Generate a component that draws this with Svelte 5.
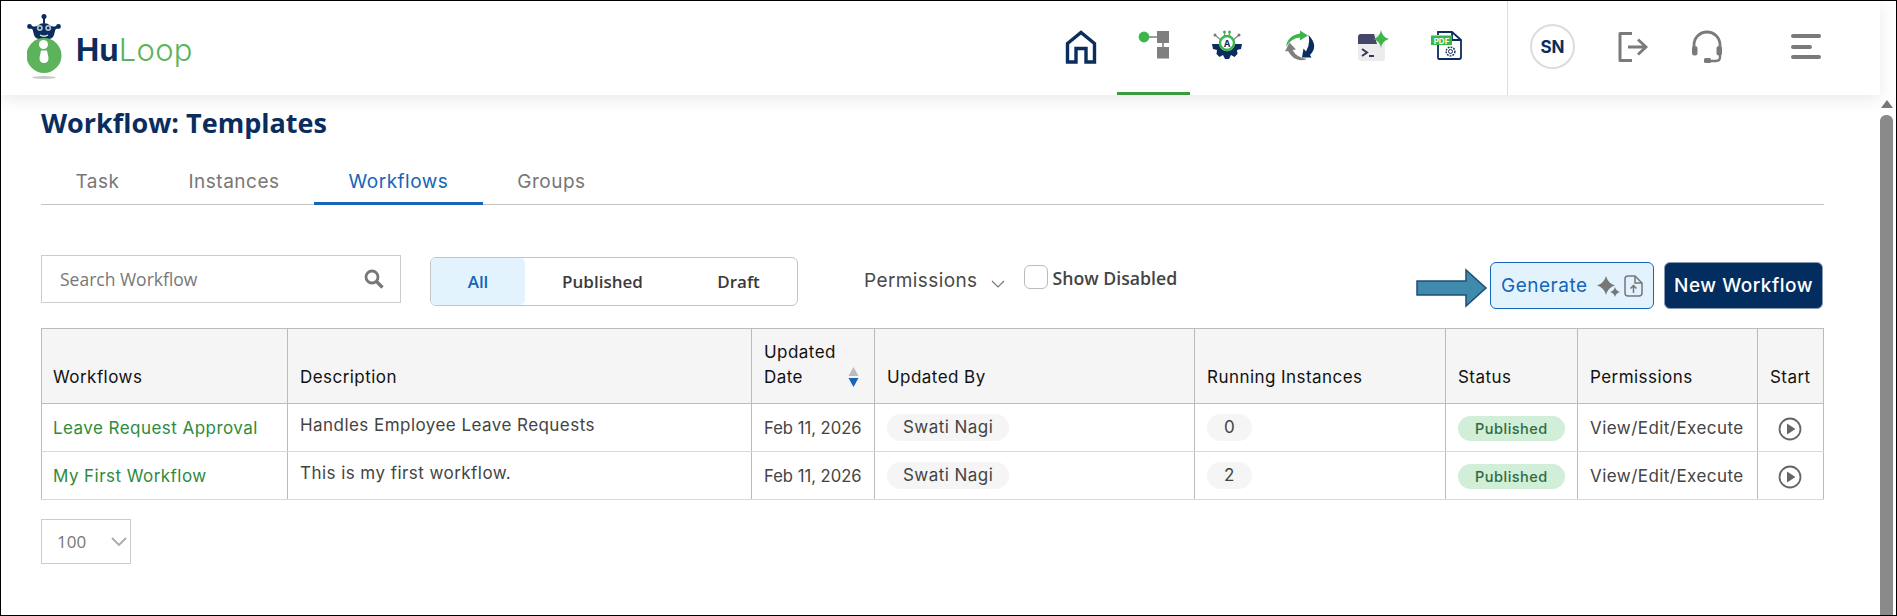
<script>
	const tabs = ['Task', 'Instances', 'Workflows', 'Groups'];
	const rows = [
		{ name: 'Leave Request Approval', desc: 'Handles Employee Leave Requests', date: 'Feb 11, 2026', by: 'Swati Nagi', running: 0 },
		{ name: 'My First Workflow', desc: 'This is my first workflow.', date: 'Feb 11, 2026', by: 'Swati Nagi', running: 2 }
	];
</script>

<div class="frame">
	<div class="page">
		<header>
			<div class="logo">
				<svg width="50" height="72" viewBox="0 0 50 72">
					<circle cx="17" cy="2.500" r="2.500" fill="#0a2d5e" />
					<rect x="16" y="4" width="2" height="5" fill="#0a2d5e" />
					<path d="M5 13 L10 12 Q17 6 24 12 L29 13 L27 21 Q26 25.500 17 25.500 Q8 25.500 7 21 Z" fill="#0a2d5e" />
					<circle cx="2.500" cy="12.500" r="2.400" fill="#0a2d5e" />
					<circle cx="31.500" cy="12.500" r="2.400" fill="#0a2d5e" />
					<path d="M3 12.500 L8 15 M31 12.500 L26 15" stroke="#0a2d5e" stroke-width="3" />
					<circle cx="12.800" cy="14" r="3" fill="#b4c0d0" />
					<circle cx="21.200" cy="14" r="3" fill="#b4c0d0" />
					<circle cx="12.800" cy="14" r="1.300" fill="#0a2d5e" />
					<circle cx="21.200" cy="14" r="1.300" fill="#0a2d5e" />
					<path d="M13 21 Q17 23.500 21 21" stroke="#e3e8ef" stroke-width="1.300" fill="none" />
					<circle cx="17" cy="41.500" r="17.500" fill="#5cb35c" />
					<circle cx="16.500" cy="30.500" r="4.500" fill="#fff" />
					<path d="M14 36.500 H20 L21.500 44 Q21.500 49 17 49 Q12.500 49 12.500 44 Z" fill="#fff" />
					<ellipse cx="17" cy="63.500" rx="12" ry="1.500" fill="#c9c9c9" />
				</svg>
				<span class="brand"><b>Hu</b><span>Loop</span></span>
			</div>

			<nav>
				<div class="nav-item">
					<svg width="32" height="34" viewBox="0 0 32 34">
						<path d="M2.500 32 V13.500 L16 2.500 L29.500 13.500 V32 H21 V18.500 H11 V32 Z" fill="none" stroke="#0a2d5e" stroke-width="3.400" />
					</svg>
				</div>
				<div class="nav-item active">
					<svg width="32" height="32" viewBox="0 0 32 32">
						<path d="M6 7 H20 M25 12 V20" stroke="#7f7f7f" stroke-width="1.600" fill="none" />
						<circle cx="6" cy="7" r="5.400" fill="#3cb54a" />
						<rect x="19" y="1" width="12" height="12" fill="#7f7f7f" />
						<rect x="19" y="17" width="12" height="11.500" fill="#7f7f7f" />
					</svg>
				</div>
				<div class="nav-item">
					<svg width="32" height="30" viewBox="0 0 32 30">
						<path d="M1 14 H8 L9 17 A8 8 0 0 0 23 17 L24 14 H31 L30 19 L26 20 L26.500 24 L23.500 27 L20 25 L18 29 H14 L12 25 L8.500 27 L5.500 24 L6 20 L2 19 Z" fill="#0a2d5e" />
						<path d="M4 5 L11 11 M28 5 L21 11 M13.500 3 V8 M18.500 3 V8" stroke="#888" stroke-width="1.200" />
						<circle cx="4" cy="5" r="1.500" fill="#777" />
						<circle cx="28" cy="5" r="1.500" fill="#777" />
						<circle cx="13.500" cy="2" r="1.500" fill="#3cb54a" />
						<circle cx="18.500" cy="2" r="1.500" fill="#3cb54a" />
						<circle cx="16" cy="13" r="7" fill="#fff" stroke="#3cb54a" stroke-width="2.400" />
						<text x="16" y="16.500" text-anchor="middle" class="gear-a">A</text>
					</svg>
				</div>
				<div class="nav-item">
					<svg width="32" height="32" viewBox="0 0 32 32">
						<path d="M2 17 Q3 6 16 3.500 L16 0.500 L24 5.500 L16 10.500 L16 7.500 Q7 8 2 17 Z" fill="#3cb54a" />
						<path d="M24.500 5 Q35 16 26 25 L27.500 27.500 L18 27.500 L19.500 18.500 L22 21.500 Q26.500 14 24.500 5 Z" fill="#0a2d5e" />
						<path d="M23 29 Q11 33.500 4 21 L1 21.500 L5.500 12.500 L12 19.500 L8.500 20 Q13 28 23 29 Z" fill="#7f7f7f" />
					</svg>
				</div>
				<div class="nav-item">
					<svg width="32" height="32" viewBox="0 0 32 32">
						<rect x="1" y="4" width="27" height="27" rx="3" fill="#ececee" />
						<path d="M1 14 V7 Q1 4 4 4 H17 L20 14 Z" fill="#46466c" />
						<path d="M24 0 Q25 7 32 9 Q25 11 24 18 Q23 11 16 9 Q23 7 24 0 Z" fill="#3cb54a" />
						<path d="M5 19 L10 22.500 L5 26" fill="none" stroke="#36365a" stroke-width="2" />
						<path d="M12 26 H17" stroke="#36365a" stroke-width="2" />
					</svg>
				</div>
				<div class="nav-item">
					<svg width="32" height="30" viewBox="0 0 32 30">
						<path d="M8 5 V2 H22 L31 10 V27 Q31 29 29 29 H9 Q8 29 8 27 V15" fill="none" stroke="#0a2d5e" stroke-width="1.800" />
						<path d="M22 2 V10 H31" fill="none" stroke="#0a2d5e" stroke-width="1.800" />
						<rect x="1" y="5.500" width="21" height="9.500" fill="#3cb54a" />
						<text x="11.500" y="13.500" text-anchor="middle" class="pdf">PDF</text>
						<circle cx="20.500" cy="21.500" r="2" fill="none" stroke="#0a2d5e" stroke-width="1" />
						<circle cx="20.500" cy="21.500" r="4.400" fill="none" stroke="#0a2d5e" stroke-width="1.400" stroke-dasharray="1.800 1.100" />
					</svg>
				</div>
			</nav>

			<div class="actions">
				<div class="avatar">SN</div>
				<svg class="logout" width="32" height="32" viewBox="0 0 32 32">
					<path d="M15 2.500 H3 V29.500 H15" fill="none" stroke="#7a7a7a" stroke-width="3" stroke-linejoin="round" />
					<path d="M11 16 H28 M21 8.500 L29 16 L21 23.500" fill="none" stroke="#7a7a7a" stroke-width="2.800" />
				</svg>
				<svg class="headset" width="32" height="34" viewBox="0 0 32 34">
					<path d="M3 18 V15 A13 13 0 0 1 29 15 V18" fill="none" stroke="#7a7a7a" stroke-width="2.800" />
					<rect x="1" y="16" width="5.500" height="9.500" rx="2.500" fill="#7a7a7a" />
					<rect x="25.500" y="16" width="5.500" height="9.500" rx="2.500" fill="#7a7a7a" />
					<path d="M29 24 V27 Q29 31 25 31 H15" fill="none" stroke="#7a7a7a" stroke-width="2.400" />
					<rect x="13" y="28" width="7" height="5" rx="1.500" fill="#7a7a7a" />
				</svg>
				<div class="burger"><i></i><i class="short"></i><i></i></div>
			</div>
		</header>

		<main>
			<h1>Workflow: Templates</h1>

			<div class="tabs">
				{#each tabs as tab}
					<div class="tab" class:current={tab === 'Workflows'}>{tab}</div>
				{/each}
			</div>

			<div class="toolbar">
				<div class="search">
					<span>Search Workflow</span>
					<svg width="20" height="20" viewBox="0 0 20 20">
						<circle cx="8" cy="8" r="6" fill="none" stroke="#777" stroke-width="2.800" />
						<path d="M12.500 12.500 L18.500 18.500" stroke="#777" stroke-width="3.400" />
					</svg>
				</div>
				<div class="segment">
					<div class="seg on">All</div>
					<div class="seg pub">Published</div>
					<div class="seg draft">Draft</div>
				</div>
				<div class="perm">
					Permissions
					<svg width="14" height="8" viewBox="0 0 14 8"><path d="M1 1 L7 7 L13 1" fill="none" stroke="#777" stroke-width="1.200" /></svg>
				</div>
				<div class="check">
					<span class="box"></span>
					<span>Show Disabled</span>
				</div>
				<div class="buttons">
					<svg class="pointer" width="72" height="40" viewBox="0 0 72 40">
						<path d="M1 13 H50 V2 L70 20 L50 38 V27 H1 Z" fill="#3f8aad" stroke="#1d4f75" stroke-width="1.500" />
					</svg>
					<button class="generate">
						Generate
						<svg width="23" height="22" viewBox="0 0 23 22">
							<path d="M9 1 Q11 8.500 18 10.500 Q11 12.500 9 20 Q7 12.500 0 10.500 Q7 8.500 9 1 Z" fill="#777" />
							<path d="M18 12 Q19 16 23 17 Q19 18 18 22 Q17 18 13 17 Q17 16 18 12 Z" fill="#777" />
						</svg>
						<svg width="19" height="22" viewBox="0 0 19 22">
							<path d="M11 1 H4 Q1 1 1 4 V18 Q1 21 4 21 H15 Q18 21 18 18 V8 Z M11 1 V8 H18" fill="none" stroke="#777" stroke-width="1.500" />
							<path d="M9.500 18 V11 M6.500 13.500 L9.500 10.500 L12.500 13.500" fill="none" stroke="#777" stroke-width="1.500" />
						</svg>
					</button>
					<button class="new">New Workflow</button>
				</div>
			</div>

			<table>
				<colgroup>
					<col style="width:246px" />
					<col style="width:464px" />
					<col style="width:123px" />
					<col style="width:320px" />
					<col style="width:251px" />
					<col style="width:132px" />
					<col style="width:180px" />
					<col style="width:66px" />
				</colgroup>
				<thead>
					<tr>
						<th>Workflows</th>
						<th>Description</th>
						<th>
							<div class="sort">
								<span>Updated<br />Date</span>
								<svg width="11" height="20" viewBox="0 0 11 20">
									<path d="M5.500 0 L10.500 9 H0.500 Z" fill="#bbb" />
									<path d="M0.500 11 H10.500 L5.500 20 Z" fill="#1565b8" />
								</svg>
							</div>
						</th>
						<th>Updated By</th>
						<th>Running Instances</th>
						<th>Status</th>
						<th>Permissions</th>
						<th>Start</th>
					</tr>
				</thead>
				<tbody>
					{#each rows as row}
						<tr>
							<td class="name">{row.name}</td>
							<td class="desc">{row.desc}</td>
							<td class="date">{row.date}</td>
							<td><span class="chip">{row.by}</span></td>
							<td><span class="chip num">{row.running}</span></td>
							<td><span class="status">Published</span></td>
							<td>View/Edit/Execute</td>
							<td class="start">
								<svg width="24" height="24" viewBox="0 0 24 24">
									<circle cx="12" cy="12" r="10.500" fill="none" stroke="#666" stroke-width="1.800" />
									<path d="M9 6.500 L17.500 12 L9 17.500 Z" fill="#666" />
								</svg>
							</td>
						</tr>
					{/each}
				</tbody>
			</table>

			<div class="pager">
				<span>100</span>
				<svg width="16" height="9" viewBox="0 0 16 9"><path d="M1 1 L8 8 L15 1" fill="none" stroke="#aaa" stroke-width="1.800" /></svg>
			</div>
		</main>
	</div>

	<div class="scrollbar">
		<i class="up"></i>
		<i class="thumb"></i>
	</div>
</div>

<style>
	:global(body) {
		margin: 0;
		background: #fff;
		font-family: Inter, 'Open Sans', sans-serif;
		overflow: hidden;
	}

	.frame {
		display: flex;
		height: 616px;
		box-sizing: border-box;
		border: 1px solid #000;
		background: #fff;
	}

	.page {
		flex: 1;
		min-width: 0;
		position: relative;
	}

	header {
		display: flex;
		align-items: center;
		height: 94px;
		background: #fff;
		box-shadow: 0 4px 16px rgba(0, 0, 0, 0.09);
		position: relative;
	}

	.logo {
		display: flex;
		align-items: flex-start;
		align-self: flex-start;
		padding: 13px 0 0 26px;
		width: 1043px;
		box-sizing: border-box;
	}

	.logo svg {
		flex: none;
	}

	.brand {
		font-size: 31px;
		line-height: 38px;
		margin-top: 17px;
		margin-left: -1px;
		color: #5cb35c;
		font-weight: 300;
		letter-spacing: 0.2px;
	}

	.brand b {
		color: #0a2d5e;
		font-weight: 700;
	}

	nav {
		display: flex;
		height: 94px;
	}

	.nav-item {
		width: 73px;
		height: 91px;
		display: flex;
		justify-content: center;
		padding-top: 29px;
		box-sizing: border-box;
	}

	.nav-item.active {
		height: 94px;
		border-bottom: 3px solid #3a9a3e;
	}

	.actions {
		display: flex;
		align-items: center;
		height: 94px;
		margin-left: 25px;
		border-left: 1px solid #ddd;
		flex: 1;
	}

	.avatar {
		width: 45px;
		height: 45px;
		margin-left: 22px;
		box-sizing: border-box;
		border: 2px solid #dcdcdc;
		border-radius: 50%;
		display: flex;
		align-items: center;
		justify-content: center;
		color: #0a2d5e;
		font-weight: 700;
		font-size: 17px;
		margin-top: -3px;
	}

	.logout {
		margin-left: 42px;
		margin-top: -3px;
	}

	.headset {
		margin-left: 42px;
		margin-top: -3px;
	}

	.burger {
		margin-left: 68px;
		margin-top: -3px;
		display: flex;
		flex-direction: column;
		gap: 6.500px;
		width: 30px;
	}

	.burger i {
		display: block;
		height: 4px;
		background: #7a7a7a;
		border-radius: 2px;
	}

	.burger .short {
		width: 21px;
	}

	main {
		padding: 9px 56px 0 40px;
	}

	h1 {
		margin: 0;
		font: 700 27px/38px 'Open Sans', sans-serif;
		color: #0a2d5e;
	}

	.tabs {
		display: flex;
		margin-top: 16px;
		border-bottom: 1px solid #c4c4c4;
		height: 47px;
		box-sizing: border-box;
	}

	.tab {
		padding: 12px 34.500px 0;
		font-size: 19px;
		letter-spacing: 0.5px;
		line-height: 24px;
		color: #777;
		height: 47px;
		box-sizing: border-box;
	}

	.tab.current {
		color: #1565b8;
		border-bottom: 3px solid #1565b8;
	}

	.toolbar {
		display: flex;
		align-items: flex-start;
		margin-top: 50px;
		height: 73px;
	}

	.search {
		width: 360px;
		height: 48px;
		box-sizing: border-box;
		border: 1px solid #ccc;
		display: flex;
		align-items: center;
		justify-content: space-between;
		padding: 0 16px 0 18px;
		font: 400 17.500px 'Open Sans', sans-serif;
		color: #777;
	}

	.segment {
		margin: 2px 0 0 29px;
		width: 368px;
		height: 49px;
		box-sizing: border-box;
		border: 1px solid #c4c4c4;
		border-radius: 6px;
		display: flex;
		font: 600 17px 'Open Sans', sans-serif;
		color: #3a3a3a;
	}

	.seg {
		display: flex;
		align-items: center;
		justify-content: center;
	}

	.seg.on {
		width: 94px;
		background: #e3f3fd;
		border-radius: 5px;
		color: #1565b8;
	}

	.seg.pub {
		width: 155px;
	}

	.seg.draft {
		flex: 1;
	}

	.perm {
		margin: 14px 0 0 66px;
		display: flex;
		align-items: center;
		gap: 13px;
		font-size: 19px;
		letter-spacing: 0.4px;
		line-height: 24px;
		color: #4a4a4a;
	}

	.perm svg {
		margin-top: 6px;
	}

	.check {
		margin: 10px 0 0 19px;
		display: flex;
		align-items: flex-start;
		gap: 5px;
		font: 600 17.700px/26px 'Open Sans', sans-serif;
		color: #444;
	}

	.box {
		width: 24px;
		height: 24px;
		box-sizing: border-box;
		border: 1px solid #bbb;
		border-radius: 6px;
	}

	.buttons {
		margin-left: auto;
		margin-top: 7px;
		margin-right: 1px;
		display: flex;
		align-items: flex-start;
	}

	.pointer {
		margin: 6px 2px 0 0;
	}

	button {
		height: 47px;
		box-sizing: border-box;
		border-radius: 6px;
		font-family: inherit;
		font-size: 19px;
		letter-spacing: 0.5px;
		font-weight: 500;
		padding: 0;
	}

	.generate {
		width: 164px;
		background: #e3f3fd;
		border: 1px solid #1565b8;
		color: #1565b8;
		display: flex;
		align-items: center;
		padding-left: 10px;
		font-weight: 400;
	}

	.generate svg:first-of-type {
		margin-left: 9px;
		margin-right: 4px;
	}

	.new {
		width: 159px;
		margin-left: 10px;
		background: #022d5e;
		border: 1px solid #8a9ab0;
		color: #fff;
	}

	table {
		width: 1782px;
		table-layout: fixed;
		border-collapse: collapse;
		font-size: 17px;
		letter-spacing: 0.45px;
		color: #444;
	}

	th {
		height: 75px;
		box-sizing: border-box;
		background: #f5f5f5;
		border: 1px solid #bbb;
		padding: 0 0 13px 12px;
		text-align: left;
		vertical-align: bottom;
		font-weight: 400;
		color: #111;
		line-height: 25px;
	}

	td {
		height: 48px;
		padding: 0 0 0 12px;
		border: 1px solid #d8d8dc;
		border-left-color: #bbb;
		border-right-color: #bbb;
		box-sizing: border-box;
		white-space: nowrap;
	}

	th:first-child,
	td:first-child {
		padding-left: 11px;
	}

	td.name {
		color: #2e8b3d;
	}

	td.desc {
		padding-bottom: 5px;
	}

	td.date {
		font-size: 16.600px;
		letter-spacing: 0;
	}

	td.start {
		padding: 3px 0 0 20px;
	}

	td.start svg {
		display: block;
	}

	.sort {
		display: flex;
		align-items: flex-end;
		justify-content: space-between;
		padding-right: 15px;
	}

	.sort svg {
		margin-bottom: 3px;
	}

	.chip {
		display: inline-block;
		padding: 0 16px;
		line-height: 27px;
		border-radius: 14px;
		background: #f5f5f5;
	}

	.chip.num {
		padding: 0 17px;
	}

	.status {
		display: inline-block;
		padding: 0 17px;
		line-height: 25px;
		border-radius: 13px;
		background: #d0eed8;
		color: #2f6b3d;
		font-size: 14.500px;
		letter-spacing: 0.5px;
		font-weight: 500;
		margin-top: 2px;
	}

	.pager {
		margin-top: 19px;
		width: 90px;
		height: 45px;
		box-sizing: border-box;
		border: 1px solid #ccc;
		display: flex;
		align-items: center;
		justify-content: space-between;
		padding: 0 3px 0 15px;
		font: 400 17px 'Open Sans', sans-serif;
		color: #777;
	}

	.scrollbar {
		width: 16px;
		flex: none;
		padding: 99px 3px 0 0;
		box-sizing: border-box;
		display: flex;
		flex-direction: column;
		align-items: center;
		background: #fff;
	}

	.up {
		width: 0;
		height: 0;
		border: 6px solid transparent;
		border-top: 0;
		border-bottom: 8px solid #777;
	}

	.thumb {
		margin-top: 7px;
		width: 13px;
		flex: 1;
		background: #8a8a8a;
		border-radius: 6px 6px 0 0;
	}

	.gear-a {
		font: 700 9px Inter, sans-serif;
		fill: #0a2d5e;
	}

	.pdf {
		font: 700 8px Inter, sans-serif;
		letter-spacing: 0;
		fill: #fff;
	}
</style>
